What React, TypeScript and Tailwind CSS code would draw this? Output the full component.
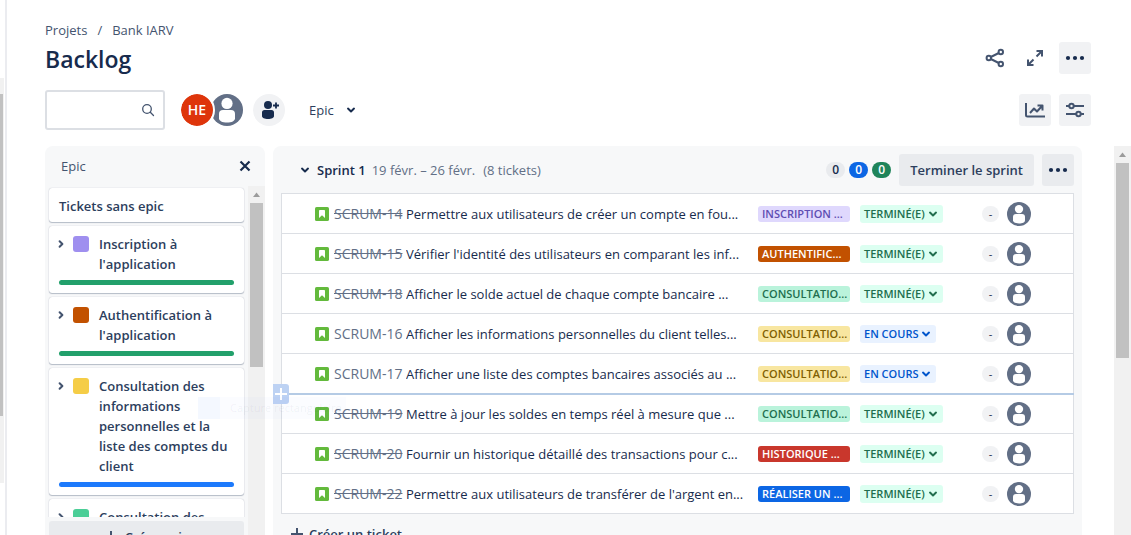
import type { ReactNode } from "react";

type Status = "done" | "progress";

interface Ticket {
  id: string;
  title: string;
  epic: string;
  epicClass: string;
  status: Status;
  struck: boolean;
}

const PURPLE = "bg-[#dfd8fd] text-[#5e4db2]";
const ORANGE = "bg-[#c25100] text-white";
const GREEN = "bg-[#baf3db] text-[#216e4e]";
const YELLOW = "bg-[#f8e6a0] text-[#7f5f01]";
const RED = "bg-[#c9372c] text-white";
const BLUE = "bg-[#0c66e4] text-white";

const tickets: Ticket[] = [
  { id: "SCRUM-14", title: "Permettre aux utilisateurs de créer un compte en fou...", epic: "INSCRIPTION ...", epicClass: PURPLE, status: "done", struck: true },
  { id: "SCRUM-15", title: "Vérifier l'identité des utilisateurs en comparant les inf...", epic: "AUTHENTIFIC...", epicClass: ORANGE, status: "done", struck: true },
  { id: "SCRUM-18", title: "Afficher le solde actuel de chaque compte bancaire ...", epic: "CONSULTATIO...", epicClass: GREEN, status: "done", struck: true },
  { id: "SCRUM-16", title: "Afficher les informations personnelles du client telles...", epic: "CONSULTATIO...", epicClass: YELLOW, status: "progress", struck: false },
  { id: "SCRUM-17", title: "Afficher une liste des comptes bancaires associés au ...", epic: "CONSULTATIO...", epicClass: YELLOW, status: "progress", struck: false },
  { id: "SCRUM-19", title: "Mettre à jour les soldes en temps réel à mesure que ...", epic: "CONSULTATIO...", epicClass: GREEN, status: "done", struck: true },
  { id: "SCRUM-20", title: "Fournir un historique détaillé des transactions pour c...", epic: "HISTORIQUE ...", epicClass: RED, status: "done", struck: true },
  { id: "SCRUM-22", title: "Permettre aux utilisateurs de transférer de l'argent en...", epic: "RÉALISER UN ...", epicClass: BLUE, status: "done", struck: true },
];

const epics = [
  { lines: ["Inscription à", "l'application"], swatch: "bg-[#9f8fef]", bar: "bg-[#22a06b]" },
  { lines: ["Authentification à", "l'application"], swatch: "bg-[#c25100]", bar: "bg-[#22a06b]" },
  { lines: ["Consultation des", "informations", "personnelles et la", "liste des comptes du", "client"], swatch: "bg-[#f5cd47]", bar: "bg-[#1d7afc]" },
  { lines: ["Consultation des"], swatch: "bg-[#4bce97]", bar: "bg-[#22a06b]" },
];

function Chevron({ dir = "down", className = "" }: { dir?: "down" | "right"; className?: string }) {
  return (
    <svg viewBox="0 0 10 10" className={`size-2.5 shrink-0 ${className}`} fill="none" stroke="currentColor" strokeWidth="2" strokeLinecap="round" strokeLinejoin="round" aria-hidden="true">
      <path d={dir === "down" ? "M2 3.600 5 6.400 8 3.600" : "M3.600 2.200 6.400 5 3.600 7.800"} />
    </svg>
  );
}

function Person({ className = "" }: { className?: string }) {
  return (
    <svg viewBox="0 0 24 24" className={`shrink-0 ${className}`} role="img" aria-label="Non assigné">
      <circle cx="12" cy="12" r="12" fill="#626f86" />
      <circle cx="12" cy="7.1" r="4.2" fill="#fff" />
      <path d="M6 15a3 3 0 0 1 3-3h6a3 3 0 0 1 3 3v3.2C18 20.3 15.5 21.4 12 21.4S6 20.3 6 18.2Z" fill="#fff" />
    </svg>
  );
}

function Plus({ className = "" }: { className?: string }) {
  return (
    <svg viewBox="0 0 12 12" className={`size-3 shrink-0 ${className}`} stroke="currentColor" strokeWidth="2" aria-hidden="true">
      <path d="M6 0v12M0 6h12" />
    </svg>
  );
}

function Dots() {
  return (
    <svg viewBox="0 0 20 6" className="h-1.5 w-5" fill="#172b4d" aria-hidden="true">
      <circle cx="3" cy="3" r="2.1" />
      <circle cx="10" cy="3" r="2.1" />
      <circle cx="17" cy="3" r="2.1" />
    </svg>
  );
}

function IconButton({ label, filled = false, children }: { label: string; filled?: boolean; children: ReactNode }) {
  return (
    <button aria-label={label} className={`flex size-8 shrink-0 items-center justify-center rounded-[3px] text-[#44546f] ${filled ? "bg-[#f1f2f4]" : ""}`}>
      {children}
    </button>
  );
}

function ScrollTrack({ thumb, className = "" }: { thumb: string; className?: string }) {
  return (
    <div className={`flex w-[17px] shrink-0 flex-col items-center bg-[#f1f1f1] ${className}`} aria-hidden="true">
      <svg viewBox="0 0 17 17" className="size-[17px] shrink-0">
        <path d="M8.5 6.5 12 11H5Z" fill="#9b9b9b" />
      </svg>
      <div className={`w-[13px] bg-[#c1c1c1] ${thumb}`} />
    </div>
  );
}

function StatusButton({ status }: { status: Status }) {
  const done = status === "done";
  return (
    <button className={`flex h-[18px] items-center gap-[3px] rounded-[3px] pr-[5px] pl-1 text-[11px] font-semibold leading-4 whitespace-nowrap ${done ? "bg-[#dcfff1] text-[#216e4e]" : "bg-[#e9f2ff] text-[#0055cc]"}`}>
      {done ? "TERMINÉ(E)" : "EN COURS"}
      <Chevron />
    </button>
  );
}

function TicketRow({ ticket }: { ticket: Ticket }) {
  return (
    <li className="flex h-10 items-center border-t border-[#dcdfe4] pr-[42px] pl-[33px]">
      <svg viewBox="0 0 14 14" className="size-3.5 shrink-0" role="img" aria-label="Story">
        <rect width="14" height="14" rx="1.6" fill="#63ba3c" />
        <path d="M4 3.8c0-.5.3-.8.8-.8h4.4c.5 0 .8.3.8.8V11L7 8.3 4 11Z" fill="#fff" />
      </svg>
      <a href="#" className={`ml-[5px] w-[72px] shrink-0 text-sm leading-5 whitespace-nowrap text-[#626f86] ${ticket.struck ? "line-through" : ""}`}>
        {ticket.id}
      </a>
      <span className="min-w-0 flex-1 overflow-hidden whitespace-nowrap">{ticket.title}</span>
      <span className={`ml-2.5 h-4 w-[92px] shrink-0 overflow-hidden rounded-[3px] px-1 text-[11px] leading-4 font-semibold whitespace-nowrap ${ticket.epicClass}`}>
        {ticket.epic}
      </span>
      <div className="ml-2.5 flex w-[122px] shrink-0">
        <StatusButton status={ticket.status} />
      </div>
      <span className="flex h-4 w-[17px] shrink-0 items-center justify-center rounded-full bg-[#f1f2f4] text-[11px]">-</span>
      <Person className="ml-2 size-6" />
    </li>
  );
}

export default function App() {
  return (
    <div className="relative flex h-screen overflow-hidden bg-white font-['Open_Sans','Noto_Sans',sans-serif] text-[13px] leading-5 text-[#172b4d]">
      <div className="flex w-[7px] shrink-0 border-r-2 border-[#ebecf0] pt-[78px]" aria-hidden="true">
        <div className="h-[405px] w-1 bg-[#f1f1f1] pt-4">
          <div className="h-[322px] w-[3px] bg-[#c1c1c1]" />
        </div>
      </div>

      <main className="flex min-w-0 flex-1 flex-col">
        <header className="flex flex-col pt-5 pr-10 pl-[38px]">
          <nav className="flex gap-2.5 text-[#44546f]" aria-label="Fil d'Ariane">
            <a href="#">Projets</a>
            <span>/</span>
            <a href="#">Bank IARV</a>
          </nav>
          <div className="mt-0.5 flex h-8 items-center justify-between">
            <h1 className="pt-0.5 text-[23px] leading-7 font-semibold">Backlog</h1>
            <div className="flex gap-2">
              <IconButton label="Partager">
                <svg viewBox="0 0 20 20" className="size-5" fill="none" stroke="currentColor" strokeWidth="2" aria-hidden="true">
                  <circle cx="3.8" cy="10" r="2.2" />
                  <circle cx="15.8" cy="4" r="2.2" />
                  <circle cx="15.8" cy="16" r="2.2" />
                  <path d="m5.8 9 8-4M5.8 11l8 4" />
                </svg>
              </IconButton>
              <IconButton label="Plein écran">
                <svg viewBox="0 0 20 20" className="size-5" fill="none" stroke="currentColor" strokeWidth="2" aria-hidden="true">
                  <path d="M11.5 3H17v5.5M17 3l-5.5 5.5M8.5 17H3v-5.5M3 17l5.5-5.5" />
                </svg>
              </IconButton>
              <IconButton label="Plus" filled>
                <Dots />
              </IconButton>
            </div>
          </div>
          <div className="mt-4 flex h-10 items-center">
            <label className="flex h-10 w-[120px] items-center rounded-[3px] border-2 border-[#dcdfe4] pr-2">
              <input type="search" aria-label="Rechercher dans le backlog" className="h-full min-w-0 flex-1 bg-transparent pl-2 outline-none" />
              <svg viewBox="0 0 14 14" className="size-3.5" fill="none" stroke="#44546f" strokeWidth="1.3" strokeLinecap="round" aria-hidden="true">
                <circle cx="6" cy="6" r="4.3" />
                <path d="m9.3 9.3 3.2 3.2" />
              </svg>
            </label>
            <button aria-label="HE" className="z-10 ml-3.5 flex size-9 items-center justify-center rounded-full border-2 border-white bg-[#de350b] bg-clip-padding text-sm font-semibold text-white">HE</button>
            <button aria-label="Non assigné" className="-ml-1 flex size-8 items-center justify-center">
              <Person className="size-8" />
            </button>
            <button aria-label="Ajouter des personnes" className="ml-2.5 flex size-8 items-center justify-center rounded-full bg-[#f1f2f4]">
              <svg viewBox="0 0 20 20" className="size-5" fill="#172b4d" aria-hidden="true">
                <circle cx="9" cy="5" r="4" />
                <path d="M3 12.5A2.5 2.5 0 0 1 5.500 10h7a2.500 2.500 0 0 1 2.500 2.500V16c0 2-2.500 3-6 3s-6-1-6-3Z" />
                <path d="M17 2.500v6M14 5.500h6" stroke="#172b4d" strokeWidth="1.800" />
              </svg>
            </button>
            <button className="ml-6 flex items-center gap-3 font-medium text-[#2c3e5d]">
              Epic
              <Chevron className="text-[#172b4d]" />
            </button>
            <div className="ml-auto flex gap-2">
              <IconButton label="Statistiques" filled>
                <svg viewBox="0 0 22 20" className="h-5 w-[22px]" fill="none" stroke="currentColor" strokeWidth="2" strokeLinejoin="round" aria-hidden="true">
                  <path d="M2 3v12a1.500 1.500 0 0 0 1.500 1.500H21" />
                  <path d="m6 13 4-4.500 3 3 5-5.500M13.500 5.500H18.500V10.500" />
                </svg>
              </IconButton>
              <IconButton label="Paramètres d'affichage" filled>
                <svg viewBox="0 0 20 20" className="size-5" fill="none" stroke="currentColor" strokeWidth="2" aria-hidden="true">
                  <path d="M1 6h3.500M9 6h10M1 14h10M15.500 14H19" />
                  <circle cx="6.500" cy="6" r="2.200" />
                  <circle cx="13.500" cy="14" r="2.200" />
                </svg>
              </IconButton>
            </div>
          </div>
        </header>

        <div className="mt-4 flex min-h-0 flex-1 overflow-hidden pl-[38px]">
          <aside className="flex w-[220px] shrink-0 flex-col rounded-t-lg bg-[#f7f8f9]">
            <div className="flex h-10 shrink-0 items-center justify-between px-4">
              <h2 className="font-medium text-[#44546f]">Epic</h2>
              <button aria-label="Fermer" className="-mr-0.5">
                <svg viewBox="0 0 12 12" className="size-3" fill="none" stroke="#172b4d" strokeWidth="2.2" aria-hidden="true">
                  <path d="m1.5 1.5 9 9M10.5 1.5l-9 9" />
                </svg>
              </button>
            </div>
            <div className="flex min-h-0 flex-1">
              <div className="flex min-w-0 flex-1 flex-col">
                <ul className="flex h-[331px] shrink-0 flex-col gap-1 overflow-hidden px-1 pt-0.5 font-semibold text-[#2c3e5d]">
                  <li className="flex h-[34px] shrink-0 items-center rounded-[3px] bg-white px-2.5 pt-0.5 shadow-[0_1px_1px_#091e4240,0_0_1px_#091e424f]">Tickets sans epic</li>
                  {epics.map((epic, i) => (
                    <li key={i} className="flex shrink-0 flex-col gap-1.5 rounded-[3px] bg-white px-2.5 py-2 shadow-[0_1px_1px_#091e4240,0_0_1px_#091e424f]">
                      <div className="flex items-start">
                        <button aria-label="Développer" className="-ml-[3px] flex h-5 items-center text-[#44546f]">
                          <Chevron dir="right" />
                        </button>
                        <span className={`mt-0.5 ml-[7px] size-4 shrink-0 rounded-[3px] ${epic.swatch}`} />
                        <span className="ml-2.5 flex flex-col whitespace-nowrap">
                          {epic.lines.map((line) => (
                            <span key={line}>{line}</span>
                          ))}
                        </span>
                      </div>
                      <div className={`h-[5px] rounded-full ${epic.bar}`} />
                    </li>
                  ))}
                </ul>
                <button className="mx-1 mt-1 flex h-8 shrink-0 items-center justify-center gap-2 rounded-[3px] bg-[#e9ebee] font-semibold text-[#2c3e5d]">
                  <Plus className="text-[#44546f]" />
                  Créer epic
                </button>
              </div>
              <ScrollTrack thumb="h-[164px]" />
            </div>
          </aside>

          <section className="relative ml-2 min-w-0 flex-1 rounded-t-lg bg-[#f7f8f9] px-2">
            <div className="flex h-[47px] items-center">
              <button aria-label="Réduire le sprint" className="ml-[19px] flex">
                <Chevron />
              </button>
              <h2 className="ml-[7px] font-semibold whitespace-nowrap">Sprint 1</h2>
              <span className="ml-1.5 whitespace-nowrap text-[#626f86]">19 févr. – 26 févr.</span>
              <span className="ml-2 whitespace-nowrap text-[#626f86]">(8 tickets)</span>
              <div className="ml-auto flex gap-1 text-xs leading-4 font-semibold">
                <span className="w-[19px] rounded-full bg-[#e9ebee] text-center">0</span>
                <span className="w-[19px] rounded-full bg-[#0c66e4] text-center text-white">0</span>
                <span className="w-[19px] rounded-full bg-[#1f845a] text-center text-white">0</span>
              </div>
              <button className="ml-2 h-8 rounded-[3px] bg-[#e9ebee] px-[11px] font-semibold whitespace-nowrap text-[#2c3e5d]">Terminer le sprint</button>
              <button aria-label="Actions du sprint" className="ml-2 flex size-8 items-center justify-center rounded-[3px] bg-[#e9ebee]">
                <Dots />
              </button>
            </div>
            <ul className="border-x border-b border-[#dcdfe4] bg-white">
              {tickets.map((ticket) => (
                <TicketRow key={ticket.id} ticket={ticket} />
              ))}
            </ul>
            <button className="mt-2.5 ml-2.5 flex items-center gap-1.5 font-semibold text-[#2c3e5d]">
              <Plus className="text-[#44546f]" />
              Créer un ticket
            </button>
            <div className="absolute top-[247px] right-2 left-0 h-0.5 bg-[#b5cbe5]" />
            <button aria-label="Insérer un ticket" className="absolute top-[238px] left-0 flex h-5 w-4 items-center justify-center rounded-r-[3px] bg-[#bdd2f3] text-white">
              <Plus />
            </button>
            <div className="pointer-events-none absolute top-[251px] -left-[75px] flex h-[22px] items-center gap-2.5 bg-[#1d7afc05] pr-1 text-[11px] whitespace-nowrap text-[#172b4d0f]">
              <span className="h-full w-[22px] bg-[#1d7afc08]" />
              Capture rectangulaire
            </div>
          </section>
          <ScrollTrack thumb="h-[195px]" className="ml-8" />
        </div>
      </main>
    </div>
  );
}
